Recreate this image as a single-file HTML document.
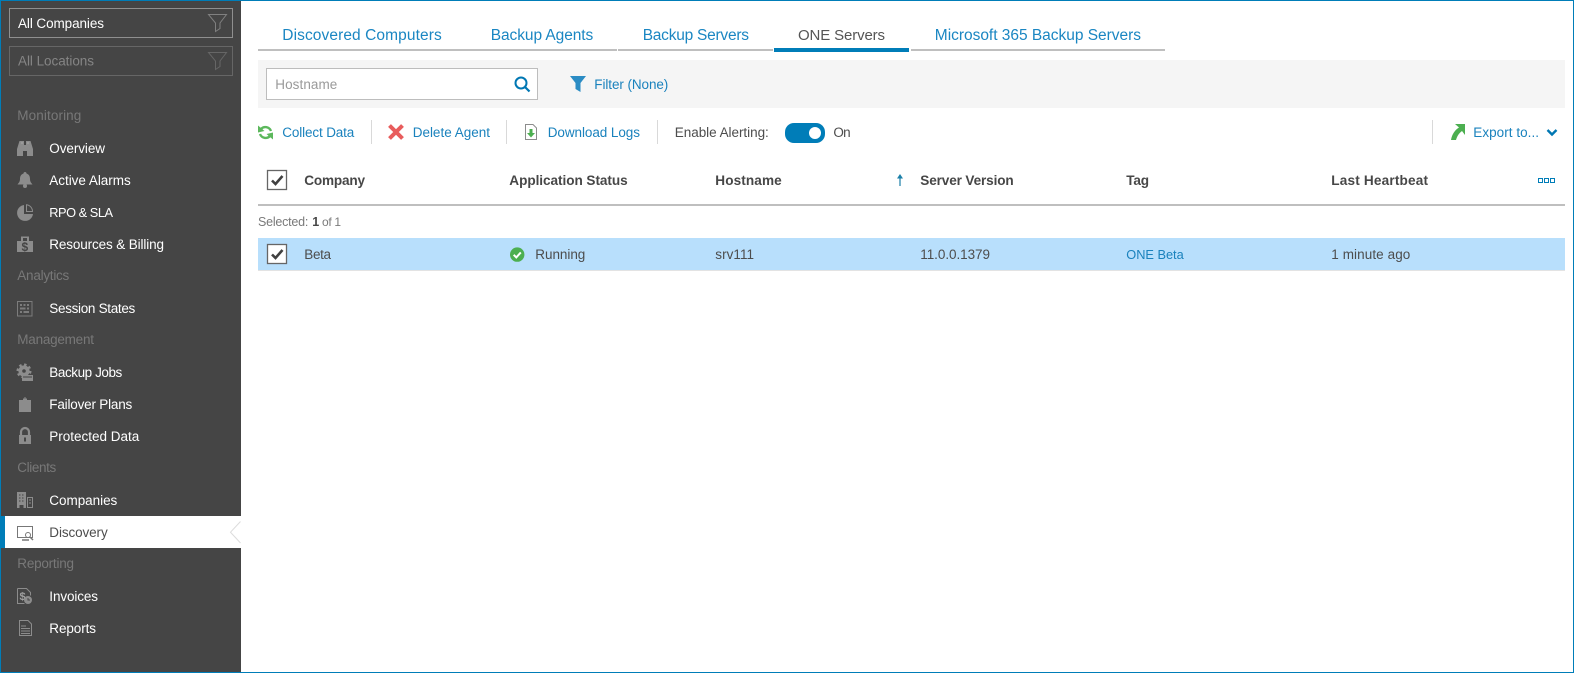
<!DOCTYPE html>
<html lang="en">
<head>
<meta charset="utf-8">
<title>Discovery - ONE Servers</title>
<style>
html,body{margin:0;padding:0;background:#fff;width:1574px;height:673px;overflow:hidden}
svg{display:block;font-family:"Liberation Sans",Arial,sans-serif;font-size:13.5px}
.n{fill:#fff}
.s{fill:#787878;font-weight:400}
.t{fill:#1a86c2;font-size:15.5px}
.l{fill:#1a82bd}
.d{fill:#4d4d4d}
.b{fill:#474747;font-weight:700;font-size:13.6px}
.i{fill:#8c8c8c}
</style>
</head>
<body>
<svg width="1574" height="673" viewBox="0 0 1574 673" xmlns="http://www.w3.org/2000/svg">
<rect width="1574" height="673" fill="#fff"/>
<!-- sidebar -->
<rect x="1" y="1" width="240" height="671" fill="#454545"/>
<rect x="5" y="516" width="236" height="32" fill="#fff"/>
<rect x="0" y="516" width="5" height="32" fill="#007db8"/>
<path d="M240.5 521.5L230.5 532.2L240.5 543" fill="#fff" stroke="#dcdcdc" stroke-width="1"/>
<rect x="241" y="521" width="6" height="23" fill="#fff"/>
<!-- window border -->
<rect x="0" y="0" width="1574" height="1" fill="#007db8"/>
<rect x="0" y="0" width="1" height="673" fill="#007db8"/>
<rect x="1573" y="0" width="1" height="673" fill="#007db8"/>
<rect x="0" y="672" width="1574" height="1" fill="#007db8"/>

<!-- scope selectors -->
<rect x="9.5" y="8.5" width="223" height="29" fill="none" stroke="#8f8f8f"/>
<text x="18" y="28" class="n" textLength="86">All Companies</text>
<path d="M208.5 14.5H226.5L220 23V28.5L215.5 31.5V23Z" fill="none" stroke="#808080"/>
<rect x="9.5" y="46.5" width="223" height="29" fill="none" stroke="#666"/>
<text x="18" y="65.5" fill="#858585" textLength="76">All Locations</text>
<path d="M208.5 52.5H226.5L220 61V66.5L215.5 69.5V61Z" fill="none" stroke="#666"/>

<!-- nav text -->
<text x="17.3" y="120" class="s" textLength="64">Monitoring</text>
<text x="49.3" y="153" class="n" textLength="55.7">Overview</text>
<text x="49.3" y="185" class="n" textLength="81.4">Active Alarms</text>
<text x="49.3" y="217" class="n" font-size="12.8" textLength="63.7">RPO &amp; SLA</text>
<text x="49.3" y="249" class="n" textLength="114.7">Resources &amp; Billing</text>
<text x="17.3" y="280" class="s" textLength="52">Analytics</text>
<text x="49.3" y="313" class="n" textLength="86">Session States</text>
<text x="17.3" y="344" class="s" textLength="76.7">Management</text>
<text x="49.3" y="377" class="n" textLength="73">Backup Jobs</text>
<text x="49.3" y="409" class="n" textLength="83">Failover Plans</text>
<text x="49.3" y="441" class="n" textLength="90">Protected Data</text>
<text x="17.3" y="472" class="s" textLength="39">Clients</text>
<text x="49.3" y="505" class="n" textLength="68">Companies</text>
<text x="49.3" y="537" fill="#4d4d4d" textLength="58.4">Discovery</text>
<text x="17.3" y="568" class="s" textLength="56.7">Reporting</text>
<text x="49.3" y="601" class="n" textLength="48.7">Invoices</text>
<text x="49.3" y="633" class="n" textLength="46.7">Reports</text>

<!-- nav icons -->
<path class="i" d="M17 156V149L19.5 141H24V145H26V141H30.5L33 149V156H27V151H23V156Z"/>
<path d="M21 143h2M27 143h2" stroke="#a8a8a8"/>
<path class="i" d="M25 172a1.6 1.6 0 0 1 1.5 1.5C29.500 174.500 30 177 30 179C30 182 31.500 183 32.500 184.500H17.500C18.500 183 20 182 20 179C20 177 20.500 174.500 23.500 173.500A1.600 1.600 0 0 1 25 172Z"/>
<circle class="i" cx="25" cy="186" r="2"/>
<path class="i" d="M24 205A8 8 0 1 0 33 214H24Z"/>
<path d="M26.5 204.7A6.8 6.8 0 0 1 32.5 211.5H26.5Z" fill="none" stroke="#8c8c8c"/>
<path class="i" d="M21 236.5h8v4.5h4v11H17v-11h4Z"/>
<rect x="23" y="238" width="4" height="3" fill="#454545"/>
<text x="21.5" y="251" fill="#454545" font-size="12" font-weight="700">$</text>
<rect x="17.5" y="301.5" width="14.5" height="14.5" fill="none" stroke="#7c7c7c"/>
<path fill="#7c7c7c" d="M20 304h2v2h-2zM23.500 304h2v2h-2zM27 304h2v2h-2zM20 307.500h5.500v2H20zM27 307.500h2v2h-2zM20 311h2v2h-2zM23.500 311h5.500v2h-5.500z"/>
<circle cx="24" cy="371" r="4.6" fill="#8c8c8c" stroke="#8c8c8c" stroke-width="2"/>
<circle cx="24" cy="371" r="6.4" fill="none" stroke="#8c8c8c" stroke-width="2.2" stroke-dasharray="2.5 2.5"/>
<circle cx="24" cy="371" r="1.8" fill="#454545"/>
<path class="i" d="M22 375h11v6H22z"/>
<path d="M23 377h9" stroke="#454545"/>
<path class="i" d="M19 400h4v-1.500h1.500V397h1v1.500H27v1.500h4v12H19Z"/>
<path class="i" d="M19 435h12v9H19z"/>
<path d="M21 435v-3a4 4 0 0 1 8 0v3" fill="none" stroke="#8c8c8c" stroke-width="2.2"/>
<rect x="24" y="437.500" width="2" height="4" fill="#454545"/>
<path class="i" d="M17 492h9v16h-2.500v-3h-4v3H17Z"/>
<path d="M19 495h1.500M22 495h1.500M19 498h1.500M22 498h1.500M19 501h1.500M22 501h1.500" stroke="#454545"/>
<rect x="27.500" y="497.500" width="5" height="10" fill="none" stroke="#8c8c8c"/>
<path d="M29 500h2M29 503h2" stroke="#8c8c8c"/>
<rect x="17.500" y="526.500" width="15" height="11" fill="none" stroke="#777"/>
<path d="M22 540h7" stroke="#777" stroke-width="1.500"/>
<circle cx="28" cy="535" r="2.500" fill="#fff" stroke="#777"/>
<path d="M30 537l3 3" stroke="#777" stroke-width="1.500"/>
<path d="M17.500 588.500h9l4 4v3M17.500 588.500v15h7" fill="none" stroke="#8c8c8c"/>
<text x="19.500" y="600" fill="#a0a0a0" font-size="11" font-weight="700">$</text>
<circle class="i" cx="28" cy="600" r="4"/>
<path d="M28 598v2h2" fill="none" stroke="#454545"/>
<path d="M19.500 620.500h8.500l3.500 3.500v11.500h-12Z" fill="none" stroke="#8c8c8c"/>
<path d="M21 626h5M21 628.500h9M21 631h9M21 633.500h9" stroke="#8c8c8c"/>

<!-- tabs -->
<text x="282.300" y="40" class="t" textLength="159.400">Discovered Computers</text>
<text x="490.700" y="40" class="t" textLength="102.600">Backup Agents</text>
<text x="642.700" y="40" class="t" textLength="106.300">Backup Servers</text>
<text x="798" y="40" font-size="15" fill="#555" textLength="87">ONE Servers</text>
<text x="934.800" y="40" class="t" textLength="206.200">Microsoft 365 Backup Servers</text>
<rect x="258" y="49" width="359" height="2" fill="#bfbfbf"/>
<rect x="618" y="49" width="155" height="2" fill="#bfbfbf"/>
<rect x="911" y="49" width="254" height="2" fill="#bfbfbf"/>
<rect x="774" y="48" width="135" height="4" fill="#007db8"/>

<!-- filter bar -->
<rect x="258" y="60" width="1307" height="48" fill="#f5f5f5"/>
<rect x="266.500" y="68.500" width="271" height="31" fill="#fff" stroke="#bdbdbd"/>
<text x="275.300" y="89" fill="#9a9a9a" textLength="62">Hostname</text>
<circle cx="521" cy="83" r="5.500" fill="none" stroke="#0077b3" stroke-width="2"/>
<path d="M525 87l4.500 4.500" stroke="#0077b3" stroke-width="2.200"/>
<path d="M570 76H586L580.500 83V92L575.500 89V83Z" fill="#2b8cc4"/>
<text x="594.300" y="89" class="l" textLength="74">Filter (None)</text>

<!-- action bar -->
<path d="M271 131A6 6 0 0 0 261 129" fill="none" stroke="#5cb85c" stroke-width="2.400"/>
<path d="M258 125.500L264.500 131L258 132.500Z" fill="#5cb85c"/>
<path d="M260 134A6 6 0 0 0 270 136" fill="none" stroke="#5cb85c" stroke-width="2.400"/>
<path d="M273 139.500L266.500 134L273 132.500Z" fill="#5cb85c"/>
<text x="282.300" y="137" class="l" textLength="72">Collect Data</text>
<rect x="371" y="120" width="1" height="24" fill="#d9d9d9"/>
<path d="M389.500 125.500L402.500 138.500M402.500 125.500L389.500 138.500" stroke="#e85c5c" stroke-width="4"/>
<text x="412.700" y="137" class="l" textLength="77.300">Delete Agent</text>
<rect x="506" y="120" width="1" height="24" fill="#d9d9d9"/>
<path d="M525.500 124.500h7.500l3.500 3.500v11.500h-11Z" fill="#fff" stroke="#8c8c8c"/>
<path d="M529.500 129h3v4h2.500l-4 4.500-4-4.500h2.500Z" fill="#4caf50"/>
<text x="547.700" y="137" class="l" textLength="92.300">Download Logs</text>
<rect x="657" y="120" width="1" height="24" fill="#d9d9d9"/>
<text x="674.800" y="137" class="d" textLength="94">Enable Alerting:</text>
<rect x="785" y="123" width="40" height="20" rx="9" fill="#007db8"/>
<circle cx="815" cy="133" r="6" fill="#fff"/>
<text x="833.400" y="137" class="d" textLength="17.200">On</text>
<rect x="1432" y="120" width="1" height="24" fill="#d9d9d9"/>
<path d="M1455 124H1465V135L1462 131C1458 134 1457 137 1456 140H1451C1452 134 1455 130 1459 127.500Z" fill="#4caf50"/>
<text x="1473.300" y="137" class="l" textLength="65.700">Export to...</text>
<path d="M1547.500 130L1552 134.500L1556.500 130" fill="none" stroke="#0077b3" stroke-width="2.400"/>

<!-- table header -->
<rect x="267.500" y="170.500" width="19" height="19" fill="#fff" stroke="#666" stroke-width="1.300"/>
<path d="M272 180.500l3.500 3.500 7-8" fill="none" stroke="#404040" stroke-width="2.600"/>
<text x="304.300" y="185" class="b" textLength="60.700">Company</text>
<text x="509.300" y="185" class="b" textLength="118.400">Application Status</text>
<text x="715.300" y="185" class="b" textLength="66.400">Hostname</text>
<path d="M900 186V177" stroke="#1a7fa8" stroke-width="1.200"/>
<path d="M897 178.500L900 174L903 178.500Z" fill="#1a7fa8"/>
<text x="920.300" y="185" class="b" textLength="93.400">Server Version</text>
<text x="1126.300" y="185" class="b" textLength="22.700">Tag</text>
<text x="1331.300" y="185" class="b" textLength="96.700">Last Heartbeat</text>
<path d="M1538.500 178.500h4v4h-4zM1544.500 178.500h4v4h-4zM1550.500 178.500h4v4h-4z" fill="none" stroke="#007db8"/>
<rect x="258" y="204" width="1307" height="2" fill="#bfbfbf"/>

<!-- selected count -->
<text x="258" y="226" font-size="12.500" fill="#7a7a7a" textLength="50.300">Selected:</text>
<text x="312.300" y="226" font-size="12.500" fill="#474747" font-weight="700">1</text>
<text x="322" y="226" font-size="12" fill="#7a7a7a" textLength="19">of 1</text>

<!-- row -->
<rect x="258" y="238" width="1307" height="32" fill="#b8dffc"/>
<rect x="258" y="270" width="1307" height="1" fill="#e3e3e3"/>
<rect x="267.500" y="244.500" width="19" height="19" fill="#fff" stroke="#666" stroke-width="1.300"/>
<path d="M272 254.500l3.500 3.500 7-8" fill="none" stroke="#404040" stroke-width="2.600"/>
<text x="304.300" y="259" class="d" textLength="26.700">Beta</text>
<circle cx="517.200" cy="254.600" r="7.200" fill="#4caf50"/>
<path d="M513.700 254.800l2.600 2.600 4.500-5" fill="none" stroke="#fff" stroke-width="2"/>
<text x="535.300" y="259" class="d" textLength="50">Running</text>
<text x="715.300" y="259" class="d" textLength="38.700">srv111</text>
<text x="920.300" y="259" class="d" textLength="69.700">11.0.0.1379</text>
<text x="1126.300" y="259" class="l" font-size="12.800" textLength="57.400">ONE Beta</text>
<text x="1331.300" y="259" class="d" textLength="79">1 minute ago</text>
</svg>
</body>
</html>
